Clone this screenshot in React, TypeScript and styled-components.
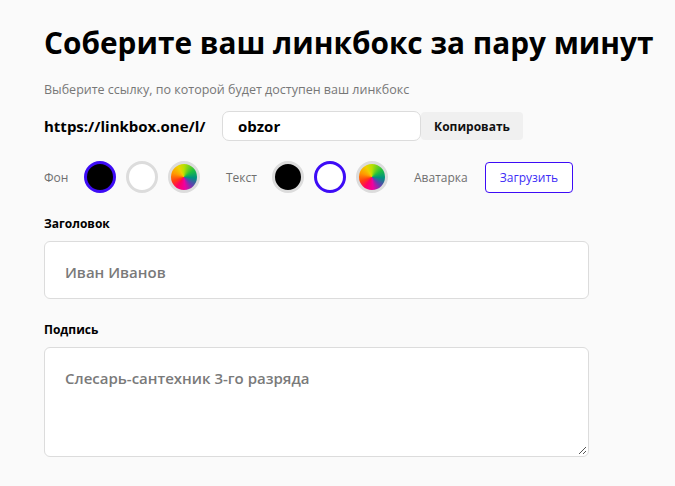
import styled, { createGlobalStyle } from "styled-components";

const GlobalStyle = createGlobalStyle`
  html, body {
    margin: 0;
    padding: 0;
    background: #fafafa;
  }
  body {
    font-family: "Open Sans", "Noto Sans", sans-serif;
    color: #000;
  }
`;

const Page = styled.div`
  width: 675px;
  height: 486px;
  padding: 24px 0 0 44px;
  box-sizing: border-box;
  overflow: hidden;
`;

const Title = styled.h1`
  margin: 0;
  font-size: 29.8px;
  font-weight: 700;
  line-height: 38px;
`;

const Hint = styled.p`
  margin: 20px 0 0 0;
  font-size: 12.5px;
  line-height: 16px;
  color: #777;
`;

const LinkRow = styled.div`
  display: flex;
  align-items: center;
  margin-top: 13px;
`;

const LinkPrefix = styled.span`
  font-size: 15px;
  font-weight: 700;
  width: 178px;
`;

const SlugInput = styled.div`
  width: 199px;
  height: 30px;
  box-sizing: border-box;
  border: 1px solid #dcdcdc;
  border-radius: 7px;
  background: #fff;
  padding-left: 15px;
  display: flex;
  align-items: center;
  font-size: 15px;
  font-weight: 700;
`;

const CopyButton = styled.button`
  height: 28px;
  width: 102px;
  border: none;
  border-radius: 4px;
  background: #f0f0f0;
  font-family: inherit;
  font-size: 12px;
  font-weight: 700;
  color: #111;
  padding: 0;
`;

const PickerRow = styled.div`
  display: flex;
  align-items: center;
  margin-top: 20px;
  height: 32px;
`;

const PickerLabel = styled.span<{ w: number }>`
  font-size: 12px;
  color: #6f6f6f;
  width: ${(p) => p.w}px;
`;

const Swatch = styled.div<{ fill: string; active?: boolean }>`
  width: 32px;
  height: 32px;
  box-sizing: border-box;
  border-radius: 50%;
  border: 3px solid ${(p) => (p.active ? "#3d0cf6" : "#dcdcdc")};
  background: ${(p) => p.fill};
  margin-right: 10px;
`;

const Spacer = styled.div<{ w: number }>`
  width: ${(p) => p.w}px;
`;

const UploadButton = styled.button`
  height: 31px;
  width: 88px;
  box-sizing: border-box;
  border: 1px solid #3d0cf6;
  border-radius: 4px;
  background: #fff;
  color: #3d2cf6;
  font-family: inherit;
  font-size: 12px;
  padding: 0;
  margin-left: 11px;
`;

const FieldLabel = styled.div`
  font-size: 12px;
  font-weight: 700;
  margin-top: 23px;
  line-height: 16px;
`;

const TextBox = styled.div<{ h: number }>`
  width: 545px;
  height: ${(p) => p.h}px;
  box-sizing: border-box;
  margin-top: 9px;
  border: 1px solid #dcdcdc;
  border-radius: 6px;
  background: #fff;
  padding: 19px 0 0 20px;
  font-size: 15px;
  font-weight: 600;
  color: #7a7a7a;
  line-height: 22px;
  position: relative;
`;

const Grip = styled.svg`
  position: absolute;
  right: 1px;
  bottom: 1px;
`;

const rainbow =
  "conic-gradient(from 0deg, #b8e000, #20c040 55deg, #009080 95deg, #6040b0 135deg, #f000a0 175deg, #ff0060 215deg, #ff4010 250deg, #ff9a00 290deg, #f0d000 330deg, #b8e000)";

export default function App() {
  return (
    <>
      <GlobalStyle />
      <Page>
        <Title>Соберите ваш линкбокс за пару минут</Title>
        <Hint>Выберите ссылку, по которой будет доступен ваш линкбокс</Hint>
        <LinkRow>
          <LinkPrefix>https://linkbox.one/l/</LinkPrefix>
          <SlugInput>obzor</SlugInput>
          <CopyButton>Копировать</CopyButton>
        </LinkRow>
        <PickerRow>
          <PickerLabel w={40}>Фон</PickerLabel>
          <Swatch fill="#000" active />
          <Swatch fill="#fff" />
          <Swatch fill={rainbow} />
          <Spacer w={16} />
          <PickerLabel w={46}>Текст</PickerLabel>
          <Swatch fill="#000" />
          <Swatch fill="#fff" active />
          <Swatch fill={rainbow} />
          <Spacer w={16} />
          <PickerLabel w={60}>Аватарка</PickerLabel>
          <UploadButton>Загрузить</UploadButton>
        </PickerRow>
        <FieldLabel>Заголовок</FieldLabel>
        <TextBox h={58}>Иван Иванов</TextBox>
        <FieldLabel>Подпись</FieldLabel>
        <TextBox h={110}>
          Слесарь-сантехник 3-го разряда
          <Grip width="10" height="10" viewBox="0 0 10 10">
            <path d="M9 2 L2 9 M9 6 L6 9" stroke="#555" strokeWidth="1" />
          </Grip>
        </TextBox>
      </Page>
    </>
  );
}
